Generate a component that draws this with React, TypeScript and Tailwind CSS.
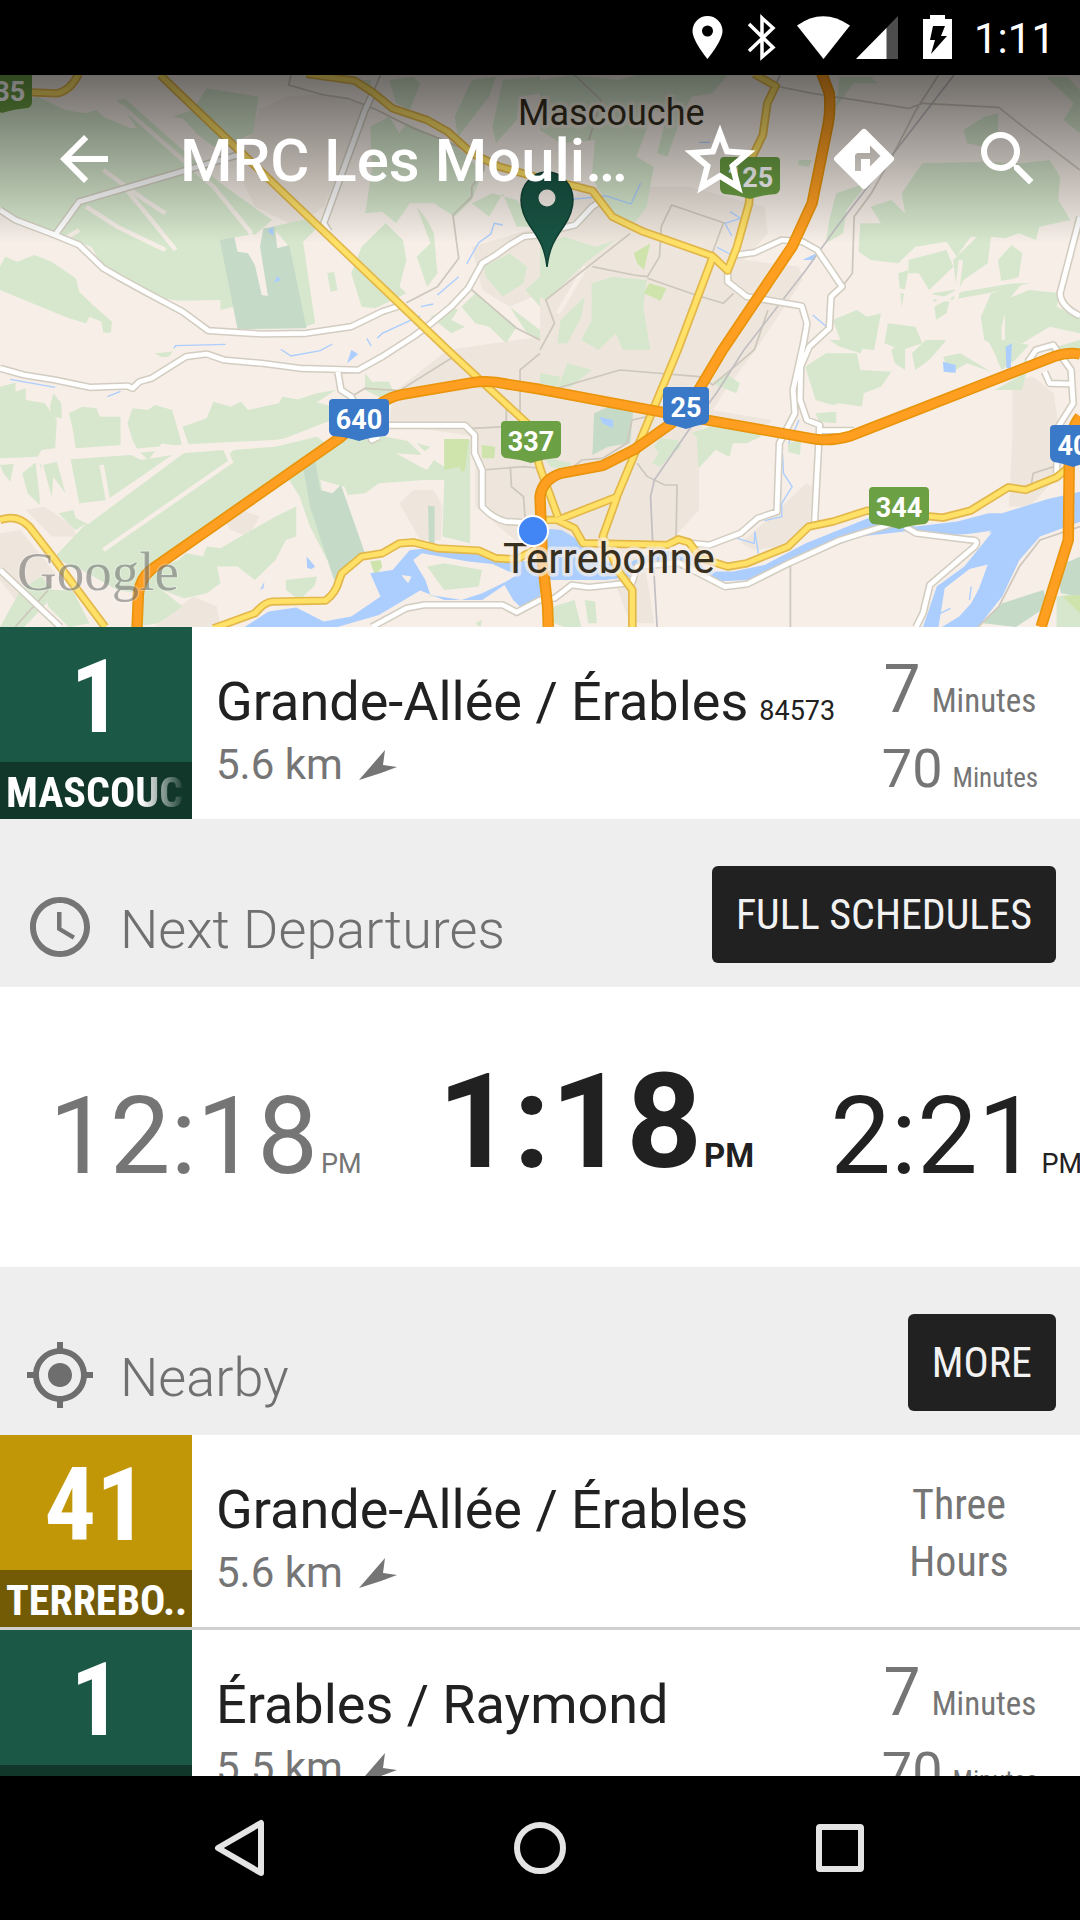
import React from "react";

const condensed = "font-['Roboto_Condensed','Liberation_Sans_Narrow',Roboto,sans-serif]";

const GREEN_NW =
  "M0 130L60 130L110 110L190 150L250 160L280 150L300 170L380 205L430 200L490 250L560 310L600 335L640 400L700 430L780 485L720 525L640 540L680 740L640 750L640 720L520 722L470 715L430 700L300 620L265 560L160 520L60 480L0 440ZM0 620L15 590L50 605L100 585L150 605L220 655L230 695L270 735L325 785L322 818L300 818L295 785L260 770L250 790L200 775L0 690ZM340 120L365 118L640 370L790 480L740 525L530 400ZM500 170L560 150L600 85L750 110L735 220L670 250L620 260L570 220L530 175ZM790 500L900 475L915 510L880 545L915 790L885 800L840 560ZM1075 200L1130 170L1160 220L1180 190L1290 240L1350 280L1400 340L1370 420L1320 470L1260 430L1190 430L1150 490L1110 455L1060 460L1080 330ZM1050 560L1120 490L1170 540L1180 600L1160 680L1180 700L1090 745L1050 740L1020 640ZM950 640L970 635L980 690L960 695ZM1210 440L1240 480L1260 520L1270 640L1240 680L1210 590L1250 550ZM1050 60L1075 60L1085 95ZM1130 60L1200 50L1220 70L1190 150L1150 130ZM1370 60L1440 50L1420 110L1330 230L1320 170ZM1460 60L1568 50L1568 100L1510 110L1500 180L1440 250L1430 200ZM1370 430L1430 400L1500 420L1568 500L1500 500L1460 400L1420 470ZM1405 620L1480 580L1530 620L1520 670L1460 710L1410 650ZM1525 690L1568 650L1568 740ZM1250 770L1310 740L1330 750L1310 780L1350 800L1310 820ZM1340 740L1380 700L1440 750L1500 800L1470 850L1420 800L1380 790ZM1480 740L1568 810L1568 840L1530 820Z";
const GREEN_NE =
  "M0 60L100 45L230 60L280 45L545 45L500 100L440 110L410 170L370 290L340 280L370 160L330 150L280 290L330 320L310 440L260 510L210 460L150 350L160 240L60 250L0 210ZM870 50L960 50L980 70L910 70L860 140ZM1230 210L1290 170L1330 160L1330 230L1290 260L1240 250ZM1110 310L1290 305L1400 310L1480 300L1510 350L1505 420L1540 480L1450 500L1440 540L1390 520L1350 535L1310 530L1250 530L1210 590L1180 545L1090 560L1040 610L960 600L925 575L930 490L990 490L960 440L1020 420L1060 460L1050 400ZM860 400L930 375L935 390L890 450L880 520L830 550L840 480ZM750 300L790 300L780 320L750 315ZM1070 600L1180 570L1200 620L1130 690L1100 640L1070 640ZM1200 600L1280 520L1310 525L1300 610L1230 660L1210 700ZM1330 600L1370 555L1400 580L1390 650L1340 670ZM1140 700L1200 690L1320 670L1420 670L1300 700L1190 720L1180 760L1150 780ZM1280 770L1310 700L1400 670L1360 720L1340 800L1340 870L1290 840ZM1350 720L1420 690L1510 700L1500 740L1568 770L1568 820L1480 800L1400 850L1350 840ZM0 560L70 530L160 560L220 540L130 610L20 720L0 710ZM150 670L210 650L310 660L300 740L320 870L240 870L220 820L170 870L120 840L150 780ZM60 780L130 710L120 770L80 850L50 850ZM850 780L920 750L950 770L990 760L970 870L880 860ZM1010 790L1090 800L1110 850L1050 870L1000 850ZM1470 50L1530 50L1568 90L1568 220L1520 180L1550 130ZM1040 640L1070 630L1050 740Z";
const GREEN_SW =
  "M0 140L45 128L45 155L75 145L75 180L130 190L165 240L160 325L120 330L110 350L0 355ZM145 200L155 160L178 190L180 235L150 230ZM200 220L240 200L280 205L290 230L350 230L350 315L220 325L210 260ZM370 250L385 205L430 210L450 195L500 210L530 320L470 310L430 360L400 330L385 300ZM530 260L600 235L620 185L670 200L700 185L720 210L810 190L820 170L930 190L970 200L960 250L870 290L720 310L550 320ZM0 375L40 372L30 425L10 400ZM65 400L100 370L120 372L115 495L80 460ZM125 375L165 365L190 460L155 410L150 470ZM205 358L380 345L410 360L500 345L310 480L230 490L215 410ZM260 540L530 340L655 330L670 365L310 630L220 690L160 650ZM680 330L800 320L920 290L960 320L970 285L1120 290L1170 300L1250 320L1220 345L1150 340L1220 380L1240 390L1260 360L1290 380L1290 300L1365 300L1365 610L1285 590L1290 420L1230 420L1100 430L1060 460L1010 465L1000 440L930 420L960 600L950 660L900 560L870 470L840 420L440 690L520 660L540 640L590 650L600 620L640 625L800 530L860 500L860 590L830 600L800 660L740 720L690 680L630 680L640 730L600 760L535 775L470 750L530 800L460 850L380 861L400 760L340 750L220 680ZM170 520L215 510L250 550L220 570ZM60 750L120 710L160 760L100 830L70 861L0 861ZM130 750L210 750L260 850L200 861L140 800ZM830 720L920 710L915 735L870 780L830 750ZM1060 100L1080 125L1130 125L1140 150L1170 160L1110 175L1060 150ZM1190 640L1225 640L1220 690L1260 680L1350 670L1430 670L1490 700L1440 730L1380 760L1250 770L1240 700ZM450 40L500 35L490 50L470 52ZM860 180L920 160L975 150L900 200ZM1380 850L1400 840L1395 861Z";
const GREEN_SE =
  "M770 80L830 40L920 40L930 90L1020 95L990 140L940 160L935 200L870 190L850 195L800 180ZM840 0L950 0L930 40L870 20ZM1020 30L1060 0L1060 90L1030 70ZM1080 40L1120 0L1180 0L1130 60L1090 90ZM1170 50L1220 40L1310 95L1240 70L1190 100ZM1300 0L1350 0L1420 15L1380 60L1340 90L1320 40ZM1390 110L1410 50L1420 60L1400 150L1320 150ZM1468 30L1568 0L1568 30L1500 35ZM800 220L860 215L860 250L810 245ZM720 310L758 300L755 345L720 335ZM440 280L490 260L550 255L620 250L640 290L600 310L560 310L550 350L510 330L460 385L455 290ZM330 320L350 295L400 300L410 320L380 345L350 380L325 370L345 340ZM60 120L80 70L150 90L90 140L50 145ZM0 100L60 110L50 140L0 130ZM10 350L90 370L80 390L30 380ZM500 130L540 100L580 130L570 160ZM40 800L100 780L120 861L70 861L20 840ZM130 780L160 785L165 850L140 850ZM1500 770L1568 760L1568 861L1500 861Z";
const URBAN =
  "M750 150L830 110L940 100L1060 130L1040 200L940 440L860 500L740 440L690 330L720 240ZM1370 560L1568 500L1700 380L2000 380L2220 440L2230 520L2160 600L2320 620L2330 660L2200 860L2100 1000L2030 1120L2030 1350L1950 1440L1860 1440L1900 1690L1830 1690L1760 1500L1540 1480L1380 1340L1380 1130L1130 1090L1140 1000L1250 910L1300 870L1568 830L1568 700L1480 740L1400 690ZM1160 1330L1200 1290L1260 1290L1285 1340L1280 1440L1220 1440ZM75 1350L130 1340L215 1400L220 1430L150 1430ZM650 1380L700 1350L755 1370L720 1430L670 1410ZM0 1420L60 1410L160 1540L60 1640L0 1560ZM450 1700L560 1610L630 1640L640 1701ZM2940 960L3000 950L3060 1000L3080 1150L3060 1260L2990 1340L2930 1340L2940 1120ZM2260 1350L2340 1270L2360 1280L2350 1390L2270 1460L2190 1470L2150 1450ZM2010 1040L2240 1080L2230 1095L2010 1070Z";
const DARK_GREEN =
  "M638 540L680 532L690 575L720 580L740 615L760 705L778 708L755 560L765 505L798 500L805 565L840 555L890 805L690 808ZM875 1190L915 1200L930 1290L965 1300L990 1275L1060 1480L970 1560L900 1340ZM1243 1337L1262 1340L1262 1460L1245 1450ZM1725 1060L1810 1020L1838 1060L1830 1150L1765 1160L1720 1185ZM3070 1520L3136 1490L3136 1610L3080 1600ZM2855 1690L2910 1630L3030 1590L3040 1640L2950 1701Z";
const LIME =
  "M1290 1137L1362 1137L1350 1230L1340 1240L1336 1220L1290 1230ZM1398 1155L1438 1160L1435 1195L1400 1195ZM1840 580L1888 550L1870 630L1850 610ZM1870 700L1885 670L1935 685L1918 722ZM1075 1505L1105 1500L1110 1520L1090 1550ZM3085 1610L3136 1605L3136 1660Z";
const WATER =
  "M710 1701L780 1655L860 1643L940 1685L1020 1670L1105 1610L1075 1540L1140 1530L1190 1470L1250 1465L1400 1485L1450 1508L1568 1500L1568 1405L1630 1410L1680 1440L1720 1470L1700 1500L1820 1510L1920 1470L2020 1490L2050 1535L2130 1535L2220 1515L2340 1450L2520 1375L2660 1400L2780 1385L2870 1360L2910 1360L3040 1318L3136 1295L3136 1385L3020 1430L2960 1500L2910 1610L2840 1701L2680 1701L2720 1580L2800 1520L2880 1418L2760 1425L2650 1412L2500 1430L2290 1510L2170 1560L2080 1565L2000 1535L1900 1500L1830 1550L1760 1560L1568 1560L1568 1615L1510 1640L1490 1620L1465 1575L1400 1620L1290 1620L1220 1592L1100 1665L980 1701ZM890 1490L915 1520L905 1527L892 1524ZM777 512L792 500L794 528ZM795 668L805 648L816 660ZM1008 910L1020 870L1040 882ZM1740 1070L1780 1080L1780 1105L1750 1090ZM2330 600L2370 580L2365 600ZM2738 905L2775 915L2775 938L2740 935ZM2920 860L2938 850L2935 925L2922 925ZM755 1590L768 1565L765 1585Z";
const ISLAND = "M2868 1514L2815 1527L2743 1585L2725 1701L2735 1701L2785 1670L2820 1630L2843 1585ZM1200 1500L1225 1480L1360 1505L1430 1512L1500 1545L1470 1565L1400 1600L1340 1620L1250 1605L1235 1560ZM1165 1545L1195 1550L1185 1570ZM2795 1425L2880 1412L2840 1440Z";
const STREAMS =
  "M505 865L510 857L655 853M815 868L845 888L930 872L965 852M30 958L160 982M312 1010L350 994M1065 835L1078 858M1095 835L1110 820L1220 768M1222 740L1258 732M1270 705L1332 650M1355 612L1390 548L1425 522L1435 490L1460 495M1660 418L1760 408L1832 432L1860 370M2030 247L2062 247M2120 455L2150 475L2105 490L2125 528M2082 562L2120 582M2360 765L2400 800M2272 1180L2275 1240L2300 1280L2270 1330L2270 1370L2220 1382M2140 1435L2190 1450L2192 1415L2202 1480M2320 1080L2290 1150M2820 1580L2815 1620M2730 1660L2760 1645";

const THIN =
  "M845 45L838 75L940 105L1010 115L1090 148L1200 205L1300 245L1405 300L1405 330L1370 380L1370 410L1315 465L1332 595L1270 680L1180 728M1105 45L1080 105M1365 685L1500 805L1568 840M1668 45L1745 120L1710 240M2252 78L2360 100L2640 145L2680 130L2900 142L2970 200L3136 330M2725 45L2660 150L2590 290L2530 400L2480 470L2475 640L2445 680M2105 490L1950 435L1920 500L1915 590L1880 650L1840 645L1720 620M1830 520L1585 720L1610 790L1568 870M1880 655L2020 705L2100 730L2130 700M2100 490L2068 580M1568 1000L1700 960L1800 930L2030 950L2070 975L2190 870L2230 750M1850 1210L1880 1250L1930 1275L1966 1275L1963 1430M1640 1240L1690 1200L1750 1195L1820 1150L1835 1080L1880 1070M1400 1230L1520 1220L1568 1225M1482 1222L1485 1280L1520 1310L1525 1380M1370 1105L1470 1100L1470 1020M1020 1010L1060 985L1160 992L1310 895M1510 1080L1510 930L1568 880M45 1700L140 1590M2295 1515L2295 1701M3136 1400L3020 1440L2960 1520L2900 1640L2840 1701M2995 1270L3000 1240L3060 1220";
const RAIL = "M2770 45L2430 500L2340 630L2160 870M2160 870L2080 1000L2000 1110L1900 1260L1889 1310L1900 1560L1908 1701M2265 45L2250 80";
const MINOR =
  "M0 450L45 480L160 525L230 555L300 625L345 652L430 700L530 755L605 812L760 822L890 820L1020 800L1110 755L1160 738M160 525L230 425L690 285M1080 105L1060 150L940 490L955 515M1743 425L1720 440L1670 495L1620 507L1568 525L1520 530L1480 555L1440 585L1400 610L1360 685L1310 740L1240 800L1200 830L1110 890L1040 930L870 925L760 910L650 900L600 882L540 890L440 955L405 965L385 985L370 978L260 982L160 960L70 945L0 925M980 930L990 990L1020 1010L1080 1140L1100 1130M1130 1096L1350 1096L1378 1125L1378 1180L1400 1230L1400 1340Q1430 1375 1470 1385L1530 1388M2138 585L2190 578L2270 540L2330 545L2373 570L2445 680L2413 710L2408 805L2350 860L2325 920L2323 1020L2343 1080L2380 1095L2365 1390M2380 1112L2480 1112M2113 632L2113 665L2168 710L2328 738L2343 790L2333 850L2303 990L2308 1060L2263 1150L2256 1355L2200 1375L2150 1420L2060 1455L2010 1450M3136 470L3078 700Q3080 740 3136 768M2985 905L3008 870L3058 855L3110 930L3116 1030L3073 1100L3068 1240M3033 935L3048 970L3113 972M1080 1701L1180 1645L1230 1635L1460 1635L1500 1657L1568 1620L1610 1615L1660 1575L1710 1582L1835 1568L1850 1520L1970 1508L2105 1580L2170 1572L2290 1510L2440 1440L2610 1385M2628 1400L2660 1420L2818 1440Q2845 1440 2830 1460L2700 1575L2680 1660L2660 1701M0 1530L175 1701";
const MAJOR =
  "M465 45L1300 870L1530 1090L1570 1230L1620 1370M890 42L1030 62L1080 95L1140 145L1240 180L1300 215L1370 280L1450 320L1568 355L1668 378L1720 392L1778 470L1868 515L2068 588L2113 632L2140 560L2175 430L2180 300L2215 225L2228 130L2252 78L2190 42M2070 590L1968 870L1900 1040L1793 1305L1785 1330L1750 1430L1800 1540L1836 1590L1836 1701M1793 1310L1620 1380L1568 1380M620 1705L740 1660Q770 1625 790 1625L945 1622Q975 1600 985 1560L992 1540L1050 1490L1110 1480L1160 1450L1200 1447L1270 1465L1390 1472L1440 1495L1500 1498L1568 1460M1618 1380L1668 1405L1693 1450L1938 1455L1970 1438L2000 1447L2035 1495L2113 1520L2168 1510L2288 1460L2348 1400L2418 1385L2518 1352L2738 1373L2818 1352L2928 1282L2978 1290L3068 1252L3100 1225M90 97L165 100Q205 92 228 42M0 1380Q50 1362 85 1400L160 1500L305 1701";
const HIGHWAY =
  "M398 1701L402 1600Q408 1555 440 1528L985 1135L1100 1035Q1130 1010 1170 1003L1370 968Q1420 960 1470 972L1568 988L1898 1052L2370 1138Q2420 1144 2470 1128L3060 890Q3100 876 3136 882M2386 40L2408 100Q2412 150 2405 190L2358 430L2300 560L2098 870L2020 1005L1950 1090L1840 1170L1750 1217L1630 1240Q1575 1258 1568 1310L1575 1500L1590 1640L1592 1701M3136 1070Q3105 1110 3105 1180L3102 1440L3023 1701";

function Road({ d, fill, edge, width, edgeWidth }: { d: string; fill: string; edge: string; width: number; edgeWidth: number }) {
  return (
    <g fill="none" strokeLinejoin="round">
      <path d={d} stroke={edge} strokeWidth={edgeWidth} />
      <path d={d} stroke={fill} strokeWidth={width} />
    </g>
  );
}

function Shield({ x, y, w, color, label }: { x: number; y: number; w: number; color: string; label: string }) {
  const h = w / 2;
  return (
    <g transform={`translate(${x} ${y})`}>
      <path d={`M${-h + 4} 0H${h - 4}Q${h} 0 ${h} 4V31Q${h} 35 ${h - 4} 37Q12 38 0 42Q-12 38 ${-h + 4} 37Q${-h} 35 ${-h} 31V4Q${-h} 0 ${-h + 4} 0Z`} fill={color} />
      <text x="0" y="30" textAnchor="middle" fill="#fff" fontSize="27" fontWeight="700">{label}</text>
    </g>
  );
}

function MapView() {
  return (
    <svg viewBox="0 0 1080 552" preserveAspectRatio="xMidYMid slice" className="absolute inset-0 size-full font-[Roboto,sans-serif]" role="img" aria-label="Map of Mascouche and Terrebonne">
      <rect width="1080" height="552" fill="#f6eee7" />
      <g transform="scale(.3444 .3333) translate(0 -45)">
        <path d={URBAN} fill="#eee6dd" />
        <g fill="#d6e7cd">
          <path d={GREEN_NW} />
          <path d={GREEN_NE} transform="translate(1568 0)" />
          <path d={GREEN_SW} transform="translate(0 840)" />
          <path d={GREEN_SE} transform="translate(1568 840)" />
        </g>
        <path d="M350 135L520 290L620 380L730 520M300 330L420 420L480 460M360 380L440 480L510 570M250 440L340 500L480 570M150 560L230 510M0 1205L200 1190L530 1160L820 1145L980 1080M295 1215L315 1330L220 1350L225 1370L255 1385L530 1175M655 1170L670 1205L300 1470M110 1210L125 1340M190 1200L215 1330M1160 1110L1240 1190M2700 740L2790 690L2960 660M2790 600L2760 860M2600 690L2760 720M1700 620L1620 760" fill="none" stroke="#f6eee7" strokeWidth="13" />
        <path d={DARK_GREEN} fill="#c5dbc8" />
        <path d={LIME} fill="#cfe4ac" />
        <path d={WATER} fill="#abceff" />
        <path d={ISLAND} fill="#f6eee7" />
        <path d="M1240 1520L1290 1510L1400 1530L1390 1580L1290 1590Z" fill="#d6e7cd" />
        <path d={STREAMS} fill="none" stroke="#abceff" strokeWidth="4" />
        <path d={THIN} fill="none" stroke="#cdc7bc" strokeWidth="5" strokeLinejoin="round" />
        <path d={RAIL} fill="none" stroke="#c2bfc2" strokeWidth="5" strokeLinejoin="round" />
        <Road d={MINOR} fill="#fff" edge="#d2cdc0" width={14} edgeWidth={23} />
        <Road d={MAJOR} fill="#ffe168" edge="#e3b84b" width={15} edgeWidth={25} />
        <Road d={HIGHWAY} fill="#ff9f22" edge="#e9940a" width={23} edgeWidth={33} />
      </g>
      <Shield x={2} y={-4} w={60} color="#6ca044" label="335" />
      <Shield x={750} y={82} w={60} color="#6ca044" label="125" />
      <Shield x={359} y={324} w={60} color="#3a78c8" label="640" />
      <Shield x={686} y={312} w={46} color="#3a78c8" label="25" />
      <Shield x={531} y={346} w={60} color="#6ca044" label="337" />
      <Shield x={899} y={412} w={60} color="#6ca044" label="344" />
      <Shield x={1073} y={350} w={46} color="#3a78c8" label="40" />
      <g fill="#38301f" stroke="#f6eee7" strokeOpacity=".7" strokeWidth="7" strokeLinejoin="round" paintOrder="stroke">
        <text x="518" y="50" fontSize="36">Mascouche</text>
        <text x="503" y="498" fontSize="42">Terrebonne</text>
      </g>
      <circle cx="533" cy="456" r="15" fill="#4285f4" stroke="#fff" strokeWidth="2" />
      <text x="17" y="515" fontSize="55" className="font-['Liberation_Serif',serif]" fill="#6a6a6a" fillOpacity=".55" stroke="#fff" strokeOpacity=".3" strokeWidth="2" paintOrder="stroke">Google</text>
      <path d="M547 192C545 174 540 165 530 151C524 142 521 134 521 125A26 28 0 0 1 573 125C573 134 570 142 564 151C554 165 549 174 547 192Z" fill="#185443" stroke="#104034" strokeWidth="1.5" />
      <circle cx="547" cy="123" r="8.5" fill="#f6eee7" />
    </svg>
  );
}

function StatusBar() {
  return (
    <header className="flex h-[75px] shrink-0 items-center justify-end bg-black pr-[25px] text-white">
      <svg width="231" height="75" viewBox="0 0 231 75" fill="#fff" aria-hidden="true">
        <path fillRule="evenodd" d="M15.500 16A15 15 0 0 0 .5 31C.5 41 15.500 59 15.500 59S30.500 41 30.500 31A15 15 0 0 0 15.500 16ZM15.500 25.500A5.500 5.500 0 1 1 15.500 36.500A5.500 5.500 0 1 1 15.500 25.500Z" />
        <path d="M57 24L81 47.500L70 57V18L81 28L57 51" fill="none" stroke="#fff" strokeWidth="3.500" />
        <path d="M105 25.500Q131 7 158 25.500L131.500 59Z" />
        <path d="M164 59L206 16V59Z" fill="#4d4d4d" />
        <path d="M164 59L194.500 28V59Z" />
      </svg>
      <svg width="29" height="75" viewBox="0 0 29 75" aria-hidden="true">
        <path d="M0 19H7V15H22V19H29V59H0Z" fill="#fff" />
        <path d="M10 26H22L18 36H24L8 54L12 40H7Z" fill="#000" />
      </svg>
      <time className="ml-[22px] pt-[3px] text-[42px] leading-[48px]">1:11</time>
    </header>
  );
}

function MapHeader() {
  return (
    <section className="relative h-[552px] shrink-0 overflow-hidden">
      <MapView />
      <div className="absolute inset-x-0 top-0 h-[168px] bg-linear-to-b from-black/55 to-transparent" />
      <div className="relative flex h-[168px] items-center text-white">
        <button aria-label="Back" className="ml-[48px] shrink-0">
          <svg width="72" height="72" viewBox="0 0 24 24" fill="#fff"><path d="M20 11H7.830l5.590-5.590L12 4l-8 8 8 8 1.410-1.410L7.830 13H20v-2z" /></svg>
        </button>
        <h1 className="ml-[60px] min-w-0 flex-1 truncate pt-[4px] text-[60px] leading-[72px] font-medium">MRC Les Moulins</h1>
        <button aria-label="Add to favourites" className="flex w-36 shrink-0 justify-center">
          <svg width="72" height="72" viewBox="0 0 72 72" fill="none" stroke="#fff" strokeWidth="6"><path d="M36 10L43 28.500L64 30L48.500 43L54 64L36 53L18 64L23.500 43L8 30L29 28.500Z" /></svg>
        </button>
        <button aria-label="Directions" className="flex w-36 shrink-0 justify-center">
          <svg width="72" height="72" viewBox="0 0 24 24" fill="#fff"><path d="M21.710 11.290l-9-9a.996.996 0 0 0-1.410 0l-9 9a.996.996 0 0 0 0 1.410l9 9c.39.39 1.020.39 1.410 0l9-9a.996.996 0 0 0 0-1.410zM14 14.500V12h-3v4H9v-5c0-.55.45-1 1-1h4V7.500l3.500 3.500-3.500 3.500z" /></svg>
        </button>
        <button aria-label="Search" className="flex w-36 shrink-0 justify-center">
          <svg width="72" height="72" viewBox="0 0 24 24" fill="#fff"><path d="M15.500 14h-.79l-.28-.27A6.471 6.471 0 0 0 16 9.500 6.500 6.500 0 1 0 9.500 16c1.610 0 3.090-.59 4.230-1.570l.27.28v.79l5 4.990L20.490 19l-4.990-5zm-6 0C7.010 14 5 11.990 5 9.500S7.010 5 9.500 5 14 7.010 14 9.500 11.990 14 9.500 14z" /></svg>
        </button>
      </div>
    </section>
  );
}

type Stop = { route: string; direction: string; gold?: boolean; fade?: boolean; name: string; code?: string; distance: string; later?: boolean };

function StopRow({ stop }: { stop: Stop }) {
  return (
    <article className="flex h-[192px] shrink-0 bg-white">
      <div className={`flex w-[192px] shrink-0 flex-col font-bold text-white ${stop.gold ? "bg-[#c19708]" : "bg-[#1b5946]"}`}>
        <div className={`h-[135px] text-center text-[102px] leading-[141px] ${condensed}`}>{stop.route}</div>
        <div className={`h-[57px] px-[6px] ${stop.gold ? "bg-[#735a05]" : "bg-[#11362a]"}`}>
          <div className={`overflow-hidden whitespace-nowrap text-[42px] leading-[62px] ${condensed} ${stop.fade ? "mask-r-from-75% mask-r-to-100%" : ""}`}>{stop.direction}</div>
        </div>
      </div>
      <div className="flex min-w-0 flex-1 flex-col justify-center pt-[18px] pl-[24px]">
        <h2 className="truncate text-[54px] leading-[66px] text-[#212121]">
          {stop.name}
          {stop.code && <span className="ml-[11px] text-[27px] leading-none">{stop.code}</span>}
        </h2>
        <p className="flex items-center gap-[16px] text-[42px] leading-[60px] text-[#757575]">
          {stop.distance}
          <svg width="38" height="30" viewBox="0 0 38 30" fill="#757575" aria-hidden="true"><path d="M0 30L26 0L24 15L38 17L22 23Z" /></svg>
        </p>
      </div>
      {stop.later ? (
        <p className={`flex w-[236px] shrink-0 flex-col items-center justify-center pt-[4px] pr-[6px] text-[42px] leading-[57px] text-[#757575] ${condensed}`}>
          <span>Three</span>
          <span>Hours</span>
        </p>
      ) : (
        <div className="flex w-[236px] shrink-0 flex-col items-center justify-center pt-[8px] pr-[4px] text-[#757575]">
          <p className="flex items-baseline gap-[11px] text-[66px] leading-[84px]">
            7 <span className={`text-[33px] leading-none ${condensed}`}>Minutes</span>
          </p>
          <p className="flex items-baseline gap-[10px] text-[54px] leading-[74px]">
            70 <span className={`text-[27px] leading-none ${condensed}`}>Minutes</span>
          </p>
        </div>
      )}
    </article>
  );
}

function SectionHeader({ icon, title, action }: { icon: React.ReactNode; title: string; action: string }) {
  return (
    <div className="flex h-[168px] shrink-0 items-end bg-[#eee] px-[24px] pb-[24px]">
      {icon}
      <h2 className="ml-[24px] flex-1 text-[54px] leading-[66px] font-light text-[#707070]">{title}</h2>
      <button className={`h-[97px] rounded-[6px] bg-[#212121] px-[24px] text-[42px] text-[#f2f2f2] ${condensed}`}>{action}</button>
    </div>
  );
}

const clock = (
  <svg width="72" height="72" viewBox="0 0 24 24" fill="#757575" aria-hidden="true"><path d="M11.990 2C6.470 2 2 6.480 2 12s4.470 10 9.990 10C17.520 22 22 17.520 22 12S17.520 2 11.990 2zM12 20c-4.420 0-8-3.580-8-8s3.580-8 8-8 8 3.580 8 8-3.580 8-8 8zM12.500 7H11v6l5.250 3.150.75-1.230-4.500-2.670z" /></svg>
);
const target = (
  <svg width="72" height="72" viewBox="0 0 24 24" fill="#6e6e6e" aria-hidden="true"><path d="M12 8c-2.210 0-4 1.790-4 4s1.790 4 4 4 4-1.790 4-4-1.790-4-4-4zm8.940 3A8.994 8.994 0 0 0 13 3.060V1h-2v2.060A8.994 8.994 0 0 0 3.060 11H1v2h2.060A8.994 8.994 0 0 0 11 20.940V23h2v-2.060A8.994 8.994 0 0 0 20.940 13H23v-2h-2.060zM12 19c-3.870 0-7-3.130-7-7s3.130-7 7-7 7 3.130 7 7-3.130 7-7 7z" /></svg>
);

export default function App() {
  return (
    <div className="flex h-screen flex-col overflow-hidden bg-white font-[Roboto,sans-serif]">
      <StatusBar />
      <main className="flex min-h-0 flex-1 flex-col overflow-hidden">
        <MapHeader />
        <StopRow stop={{ route: "1", direction: "MASCOUCHE", fade: true, name: "Grande-Allée / Érables", code: "84573", distance: "5.6 km" }} />
        <SectionHeader icon={clock} title="Next Departures" action="FULL SCHEDULES" />
        <div className="flex h-[280px] shrink-0 items-end gap-[76px] overflow-hidden bg-white pb-[68px] pl-[49px] whitespace-nowrap text-[#212121]">
          <p className="text-[108px] leading-[126px] text-[#757575]">12:18<span className="ml-[3px] text-[27px] leading-none">PM</span></p>
          <p className="text-[132px] leading-[154px] font-bold">1:18<span className="ml-[2px] text-[33px] leading-none">PM</span></p>
          <p className="text-[108px] leading-[126px]">2:21<span className="ml-[3px] text-[27px] leading-none">PM</span></p>
        </div>
        <SectionHeader icon={target} title="Nearby" action="MORE" />
        <StopRow stop={{ route: "41", direction: "TERREBO..", gold: true, name: "Grande-Allée / Érables", distance: "5.6 km", later: true }} />
        <div className="h-[3px] shrink-0 bg-[#d0d0d0]" />
        <StopRow stop={{ route: "1", direction: "MASCOUCHE", fade: true, name: "Érables / Raymond", distance: "5.5 km" }} />
      </main>
      <nav className="flex h-[144px] shrink-0 items-center justify-center bg-black">
        <button aria-label="Back" className="flex w-[300px] justify-center">
          <svg width="60" height="60" viewBox="0 0 60 60" fill="none" stroke="#e4e4e4" strokeWidth="6" strokeLinejoin="round"><path d="M51 5V55L8 30Z" /></svg>
        </button>
        <button aria-label="Home" className="flex w-[300px] justify-center">
          <svg width="60" height="60" viewBox="0 0 60 60" fill="none" stroke="#e4e4e4" strokeWidth="6"><circle cx="30" cy="30" r="23" /></svg>
        </button>
        <button aria-label="Recent apps" className="flex w-[300px] justify-center">
          <svg width="60" height="60" viewBox="0 0 60 60" fill="none" stroke="#e4e4e4" strokeWidth="6" strokeLinejoin="round"><rect x="9" y="9" width="42" height="42" rx="1" /></svg>
        </button>
      </nav>
    </div>
  );
}
